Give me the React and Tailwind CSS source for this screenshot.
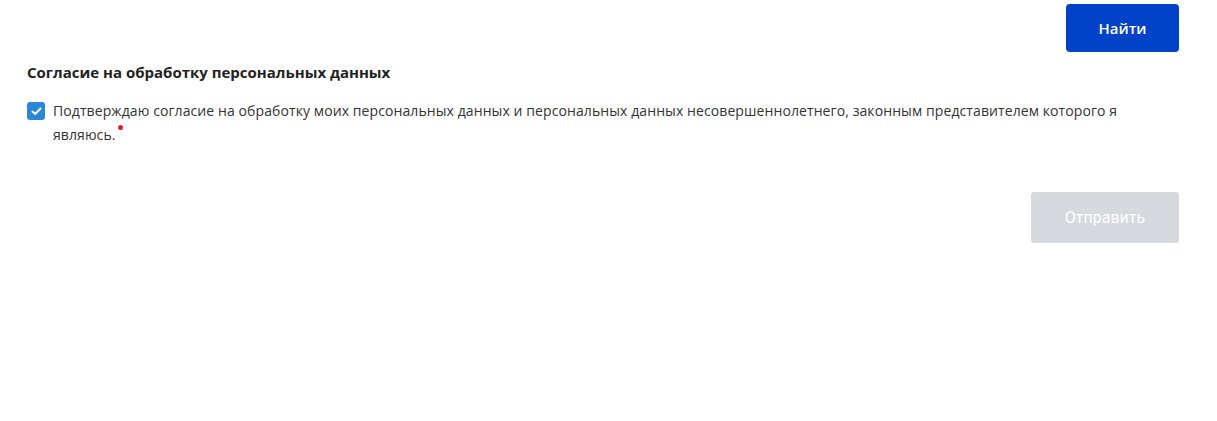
export default function App() {
  return (
    <div className="w-[1217px] h-[421px] bg-white pl-[27px] pr-[38px] pt-[4px]" style={{ fontFamily: '"Open Sans", sans-serif' }}>
      <div className="flex justify-end">
        <button className="w-[113px] h-[48px] rounded-[4px] bg-[#0042c8] text-white text-[15px] font-semibold">Найти</button>
      </div>
      <div className="mt-[10px] text-[15px] font-bold text-[#222] leading-[20px]">Согласие на обработку персональных данных</div>
      <div className="mt-[19px] flex items-start">
        <div className="mt-[1px] w-[18px] h-[18px] shrink-0 rounded-[3px] bg-[#2a86d6] flex items-center justify-center">
          <svg width="11" height="9" viewBox="0 0 11 9" fill="none">
            <path d="M1.5 4.5 L4.2 7 L9.5 1.5" stroke="white" strokeWidth="2" strokeLinecap="round" strokeLinejoin="round" />
          </svg>
        </div>
        <p className="ml-[8px] text-[14px] leading-[24px] tracking-[0.09px] text-[#333] pr-[40px] mt-[-2px]">
          Подтверждаю согласие на обработку моих персональных данных и персональных данных несовершеннолетнего, законным представителем которого я являюсь.
          <span className="relative inline-block w-0">
            <span className="absolute left-[2px] top-[-15px] w-[5px] h-[5px] rounded-full bg-[#e0202a]"></span>
          </span>
        </p>
      </div>
      <div className="mt-[45px] flex justify-end">
        <button className="w-[148px] h-[51px] rounded-[3px] bg-[#d6dadf] text-white text-[16px]" style={{ fontFamily: 'Roboto, sans-serif' }}>Отправить</button>
      </div>
    </div>
  );
}
